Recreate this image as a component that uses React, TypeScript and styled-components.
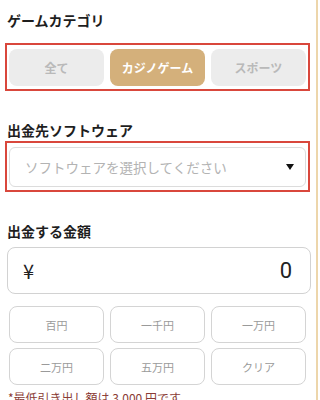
import React, { useState } from 'react';
import styled, { createGlobalStyle } from 'styled-components';

const GlobalStyle = createGlobalStyle`
  html, body {
    margin: 0;
    padding: 0;
    background: #ffffff;
  }
  body {
    font-family: "Noto Sans CJK JP", "Noto Sans", sans-serif;
    color: #222;
  }
`;

const categories = ['全て', 'カジノゲーム', 'スポーツ'];
const amounts = ['百円', '一千円', '一万円', '二万円', '五万円', 'クリア'];

const App: React.FC = () => {
  const [category, setCategory] = useState('カジノゲーム');

  return (
    <>
      <GlobalStyle />
      <Page>
        <Section>
          <Title>ゲームカテゴリ</Title>
          <Highlight>
            <ButtonRow>
              {categories.map((c) => (
                <CategoryButton key={c} $active={c === category} onClick={() => setCategory(c)}>
                  {c}
                </CategoryButton>
              ))}
            </ButtonRow>
          </Highlight>
        </Section>

        <Section $top={29}>
          <Title $gap={1}>出金先ソフトウェア</Title>
          <Highlight>
            <SelectBox>
              <Placeholder>ソフトウェアを選択してください</Placeholder>
              <svg width="8" height="6" viewBox="0 0 8 6">
                <path d="M0 0 L8 0 L4 6 Z" fill="#111" />
              </svg>
            </SelectBox>
          </Highlight>
        </Section>

        <Section $top={29}>
          <Title $gap={6}>出金する金額</Title>
          <AmountBox>
            <Yen>¥</Yen>
            <Value>0</Value>
          </AmountBox>
          <AmountGrid>
            {amounts.map((a) => (
              <AmountButton key={a}>{a}</AmountButton>
            ))}
          </AmountGrid>
          <Note>*最低引き出し額は 3,000 円です</Note>
        </Section>
      </Page>
    </>
  );
};

const Page = styled.div`
  width: 318px;
  height: 400px;
  overflow: hidden;
  box-sizing: border-box;
  padding: 10px 6px 0 5px;
  border-right: 2px solid #edd6ab;
`;

const Section = styled.div<{ $top?: number }>`
  margin-top: ${(p) => p.$top ?? 0}px;
`;

const Title = styled.div<{ $gap?: number }>`
  font-size: 14px;
  line-height: 20px;
  font-weight: 700;
  color: #1e1e1e;
  padding-left: 2px;
  margin-bottom: ${(p) => p.$gap ?? 13}px;
`;

const Highlight = styled.div`
  border: 2px solid #d9473c;
  padding: 4px 2px 3px;
`;

const ButtonRow = styled.div`
  display: grid;
  grid-template-columns: repeat(3, 1fr);
  gap: 6px;
`;

const CategoryButton = styled.button<{ $active: boolean }>`
  height: 37px;
  border: none;
  border-radius: 8px;
  font-family: inherit;
  font-size: 12px;
  font-weight: 700;
  background: ${(p) => (p.$active ? '#d4b07b' : '#ececec')};
  color: ${(p) => (p.$active ? '#ffffff' : '#b9b9b9')};
  cursor: pointer;
`;

const SelectBox = styled.div`
  height: 40px;
  box-sizing: border-box;
  border: 1px solid #dcdcdc;
  border-radius: 6px;
  display: flex;
  align-items: center;
  justify-content: space-between;
  padding: 0 11px 0 15px;
`;

const Placeholder = styled.span`
  font-size: 13.5px;
  color: #b3b3b3;
`;

const AmountBox = styled.div`
  margin: 0 -1px 0 2px;
  height: 47px;
  box-sizing: border-box;
  border: 1px solid #d2d2d2;
  border-radius: 8px;
  display: flex;
  align-items: center;
  justify-content: space-between;
  padding: 0 18px 0 15px;
`;

const Yen = styled.span`
  font-size: 20px;
  color: #222;
`;

const Value = styled.span`
  font-family: "Roboto", "Noto Sans", sans-serif;
  font-size: 22px;
  color: #222;
`;

const AmountGrid = styled.div`
  margin: 12px 4px 0;
  display: grid;
  grid-template-columns: repeat(3, 1fr);
  gap: 5px 6px;
`;

const AmountButton = styled.button`
  height: 37px;
  background: #fff;
  border: 1px solid #d4d4d4;
  border-radius: 8px;
  font-family: inherit;
  font-size: 11px;
  color: #9a9a9a;
  cursor: pointer;
`;

const Note = styled.div`
  margin-top: 4px;
  padding-left: 3px;
  font-size: 12px;
  color: #8a3b35;
`;

export default App;
